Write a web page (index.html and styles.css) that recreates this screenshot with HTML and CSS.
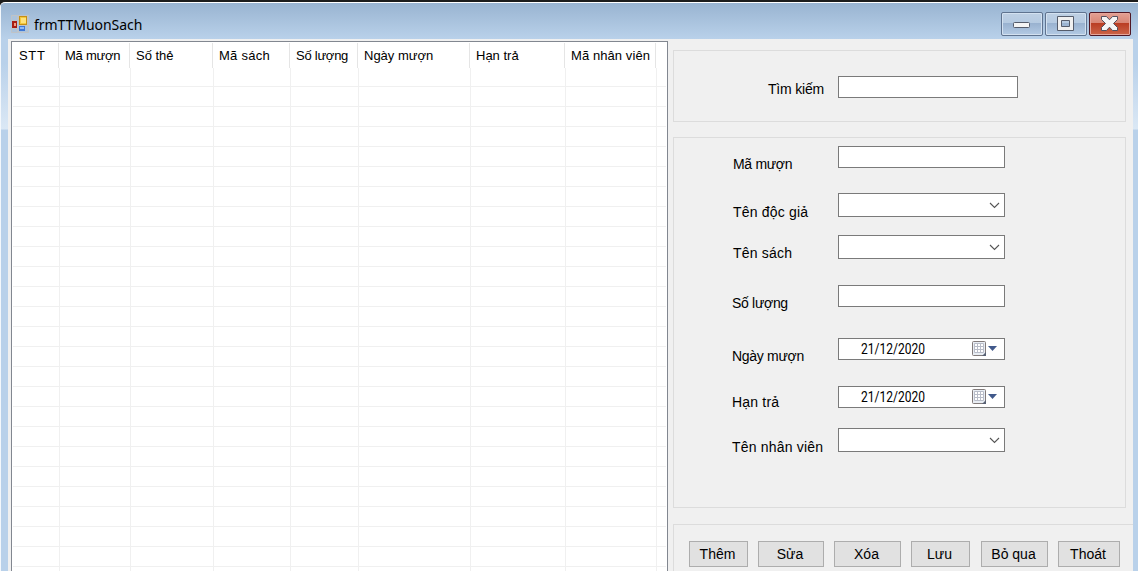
FILE: index.html
```html
<!DOCTYPE html>
<html lang="vi">
<head>
<meta charset="utf-8">
<title>frmTTMuonSach</title>
<link rel="stylesheet" href="styles.css">
</head>
<body>
<div class="window">
  <header class="titlebar">
    <svg class="app-icon" width="18" height="18" viewBox="0 0 18 18">
      <path d="M.5.500h6v5h-6zM.5 13.500h6v4h-6zM7.500 10.500h10v7h-10z" fill="#acc3db" stroke="#bfc3c7"/>
      <rect x="7" width="11" height="11" fill="#bfc3c7"/>
      <rect x="1" y="6" width="5" height="7" fill="#a91d12"/>
      <rect x="3" y="8" width="2" height="3" fill="#ef9c83"/>
      <rect x="8.500" y="1.500" width="7" height="8" fill="#f3c83c" stroke="#c68f14"/>
      <rect x="10" y="3" width="5" height="5" fill="#ffe27a"/>
      <rect x="8" y="11" width="6" height="5" fill="#3e78d6"/>
      <rect x="9" y="12" width="4" height="2" fill="#8fb9f5"/>
    </svg>
    <h1 class="title">frmTTMuonSach</h1>
    <div class="controls">
      <span class="control"><svg width="40" height="22"><rect x="11.500" y="9.500" width="16" height="5" rx="1" fill="#f4f4f4" stroke="#555c6b"/></svg></span>
      <span class="control"><svg width="40" height="22"><path d="M11.500 3.500h16v14h-16z M15.500 7.500v6h8v-6z" fill="#f0f0f0" fill-rule="evenodd" stroke="#555c6b"/></svg></span>
      <span class="control close"><svg width="40" height="22"><path d="M11.500 3.500h5l3 3.300 3-3.300h5v3l-4 4 4 4v3h-5l-3-3.300-3 3.300h-5v-3l4-4-4-4z" fill="#f5f5f5" stroke="#54515f" stroke-linejoin="round"/></svg></span>
    </div>
  </header>
  <main class="client">
    <section class="list">
      <div class="head">
        <span class="c1">STT</span><span class="c2">Mã mượn</span><span class="c3">Số thẻ</span><span class="c4">Mã sách</span><span class="c5">Số lượng</span><span class="c6">Ngày mượn</span><span class="c7">Hạn trả</span><span class="c8">Mã nhân viên</span>
      </div>
      <div class="rows">
        <i class="c1"></i><i class="c2"></i><i class="c3"></i><i class="c4"></i><i class="c5"></i><i class="c6"></i><i class="c7"></i><i class="c8"></i>
      </div>
    </section>
    <section class="side">
      <div class="group search"><label class="search-label">Tìm kiếm</label><span class="field"></span></div>
      <div class="group details">
        <div class="row r1"><label>Mã mượn</label><span class="field"></span></div>
        <div class="row r2"><label>Tên độc giả</label><span class="field combo"><svg width="11" height="7"><path d="M1 1l4.500 4.500L10 1" fill="none" stroke="#555" stroke-width="1.100"/></svg></span></div>
        <div class="row r3"><label>Tên sách</label><span class="field combo"><svg width="11" height="7"><path d="M1 1l4.500 4.500L10 1" fill="none" stroke="#555" stroke-width="1.100"/></svg></span></div>
        <div class="row r4"><label>Số lượng</label><span class="field"></span></div>
        <div class="row r5"><label>Ngày mượn</label><span class="field date"><span class="value">21/12/2020</span><svg width="26" height="17"><rect x=".5" y=".5" width="13" height="14" rx="1" fill="#e8edf3" stroke="#827b7b"/><path d="M2.500 2.500h9v9h-9zM5.500 2.500v9M8.500 2.500v9M2.500 5.500h9M2.500 8.500h9" fill="#fff" stroke="#b9bdc9"/><path d="M14 11v4h-4z" fill="#596275"/><path d="M16 5h9l-4.500 5z" fill="#41598b"/></svg></span></div>
        <div class="row r6"><label>Hạn trả</label><span class="field date"><span class="value">21/12/2020</span><svg width="26" height="17"><rect x=".5" y=".5" width="13" height="14" rx="1" fill="#e8edf3" stroke="#827b7b"/><path d="M2.500 2.500h9v9h-9zM5.500 2.500v9M8.500 2.500v9M2.500 5.500h9M2.500 8.500h9" fill="#fff" stroke="#b9bdc9"/><path d="M14 11v4h-4z" fill="#596275"/><path d="M16 5h9l-4.500 5z" fill="#41598b"/></svg></span></div>
        <div class="row r7"><label>Tên nhân viên</label><span class="field combo"><svg width="11" height="7"><path d="M1 1l4.500 4.500L10 1" fill="none" stroke="#555" stroke-width="1.100"/></svg></span></div>
      </div>
      <div class="group actions">
        <button class="b1">Thêm</button><button class="b2">Sửa</button><button class="b3">Xóa</button><button class="b4">Lưu</button><button class="b5">Bỏ qua</button><button class="b6">Thoát</button>
      </div>
    </section>
  </main>
</div>
</body>
</html>
```
FILE: styles.css
```css
* { box-sizing: border-box; }
body {
  margin: 0;
  width: 1138px;
  height: 571px;
  overflow: hidden;
  background: #1c1c1c;
  font: 14px/14px "Liberation Sans", Arial, sans-serif;
  color: #000;
}
.window {
  height: 569px;
  margin-top: 2px;
  padding: 0 5px 0 8px;
  border-top: 1px solid #fff;
  border-radius: 5px 0 0 0;
  background:
    linear-gradient(90deg, #f4f8fc 1px, transparent 1px),
    linear-gradient(#99b4d1 0, #b9d1ea 36px, #b9d1ea 60px, #dbe8f5 126px, #b9d1ea 127px, #b9d1ea 100%);
}
.titlebar { display: flex; height: 36px; padding: 12px 0 0 3px; }
.app-icon { flex: none; }
.title {
  margin: 0 0 0 5px;
  font: 14px/20px "Noto Sans", sans-serif;
  letter-spacing: -0.05px;
}
.controls { display: flex; gap: 2px; height: 24px; margin: -3px 2px 0 auto; }
.control {
  width: 42px;
  border: 1px solid #5f738f;
  border-radius: 2px;
  box-shadow: inset 0 0 0 1px #d3e1f0;
  background: linear-gradient(#bed0e4 0, #b5cae1 10px, #98b1cf 10px, #b3cae4 100%);
}
.control svg { display: block; }
.close {
  border-color: #4f1724;
  box-shadow: inset 0 0 0 1px #e5a59a;
  background: linear-gradient(#e3a093 0, #d88675 10px, #b93c22 10px, #cc6549 100%);
}
.client {
  display: flex;
  height: 532px;
  padding: 2px 0 0 3px;
  background: #f0f0f0;
}
.list {
  width: 657px;
  padding: 1px;
  border: 1px solid #828790;
  border-bottom: 0;
  background: #fff;
  font-size: 13px;
  line-height: 16px;
}
.head, .rows { display: flex; }
.head { height: 25px; }
.head span {
  padding: 5px 0 0 6px;
  border-right: 1px solid #e5e5e5;
  white-space: nowrap;
}
.head .c1 { letter-spacing: 0.7px; }
.head .c2, .head .c5 { letter-spacing: -0.25px; }
.head .c4 { letter-spacing: 0.25px; }
.head .c8 { letter-spacing: 0.08px; }
.rows {
  height: 510px;
  padding-left: 1px;
  background: repeating-linear-gradient(transparent 0 18px, #f0f0f0 18px 19px, transparent 19px 20px);
}
.rows i { border-right: 1px solid #f0f0f0; }
.c1 { width: 46px; }
.c2 { width: 71px; }
.c3 { width: 83px; }
.c4 { width: 77px; }
.c5 { width: 68px; }
.c6 { width: 112px; }
.c7 { width: 95px; }
.c8 { width: 91px; }
.side { width: 465px; padding: 9px 0 0 5px; }
.group { border: 1px solid #dcdcdc; }
.search {
  display: flex;
  width: 453px;
  height: 72px;
  padding: 25px 0 0 94px;
}
.search-label { width: 70px; padding-top: 6px; letter-spacing: -0.2px; }
.search .field { width: 180px; }
.field {
  display: flex;
  width: 167px;
  height: 22px;
  border: 1px solid #7a7a7a;
  background: #fff;
}
.details {
  width: 453px;
  height: 371px;
  margin-top: 15px;
  padding: 8px 0 0 58px;
}
.row { display: flex; }
.row label { width: 106px; padding-top: 11px; letter-spacing: -0.3px; white-space: nowrap; }
.combo { height: 24px; justify-content: flex-end; padding: 8px 4px 0 0; }
.r1 { height: 47px; }
.r2 { height: 42px; }
.r3 { height: 50px; }
.r4 { height: 53px; }
.r5 { height: 48px; }
.r6 { height: 42px; }
.r1 label { padding-left: 1px; }
.r2 label { padding: 12px 0 0 1px; letter-spacing: 0.2px; }
.r3 label { padding-left: 1px; letter-spacing: 0.2px; }
.r6 label { padding-top: 9px; letter-spacing: 0.2px; }
.r7 label { padding-top: 12px; letter-spacing: 0.2px; }
.date {
  padding: 2px 6px 0 22px;
  justify-content: space-between;
  font: 14px/17px Roboto, sans-serif;
}
.value { transform: scaleX(0.86); transform-origin: left; }
.actions {
  display: flex;
  width: 460px;
  height: 60px;
  margin-top: 16px;
  padding: 16px 0 0 15px;
  border-right: 0;
}
button {
  height: 26px;
  margin: 0;
  padding: 0 2px 1px 0;
  border: 1px solid #adadad;
  background: #e1e1e1;
  font: inherit;
  color: #000;
}
.b1 { width: 59px; }
.b2 { width: 66px; margin-left: 10px; }
.b3 { width: 67px; margin-left: 10px; }
.b4 { width: 59px; margin-left: 10px; }
.b5 { width: 67px; margin-left: 11px; }
.b6 { width: 62px; margin-left: 10px; }
```
